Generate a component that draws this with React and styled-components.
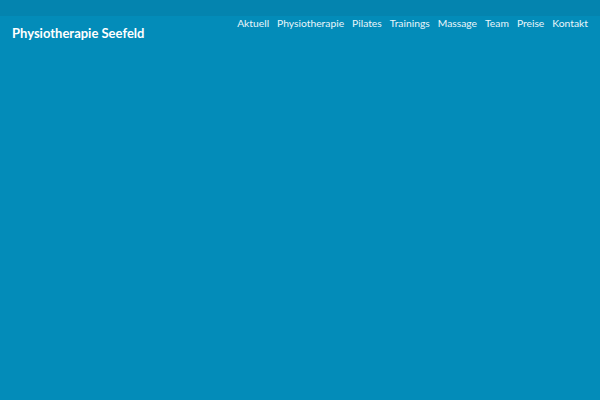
import * as React from "react"
import styled, { createGlobalStyle } from "styled-components"

const Global = createGlobalStyle`
	html, body {
		margin: 0;
		padding: 0;
		height: 100%;
		background: #038cb9;
	}
	#root {
		min-height: 100%;
	}
`

const Page = styled.div`
	width: 600px;
	height: 400px;
	background-color: #038cb9;
	font-family: "Lato", "Liberation Sans", sans-serif;
	color: #ffffff;
	overflow: hidden;
`

const TopBand = styled.div`
	height: 16px;
	background-color: #0484af;
`

const Header = styled.header`
	display: flex;
	justify-content: space-between;
	align-items: flex-start;
	padding: 0 12px;
`

const Logo = styled.a`
	margin-top: 9px;
	font-size: 13px;
	line-height: 16px;
	font-weight: 700;
	color: #ffffff;
	text-decoration: none;
`

const Menu = styled.ul`
	margin: 1px 0 0;
	padding: 0;
	list-style: none;
	display: flex;
	gap: 8px;
	font-size: 10.3px;
	line-height: 12px;

	a {
		text-decoration: none;
		color: #eaf6fb;
		font-weight: 400;
	}
`

const items = ["Aktuell", "Physiotherapie", "Pilates", "Trainings", "Massage", "Team", "Preise", "Kontakt"]

export default function App() {
	return (
		<Page>
			<Global />
			<TopBand />
			<Header>
				<Logo href="#">Physiotherapie Seefeld</Logo>
				<Menu>
					{items.map((item) => (
						<li key={item}>
							<a href="#">{item}</a>
						</li>
					))}
				</Menu>
			</Header>
		</Page>
	)
}
